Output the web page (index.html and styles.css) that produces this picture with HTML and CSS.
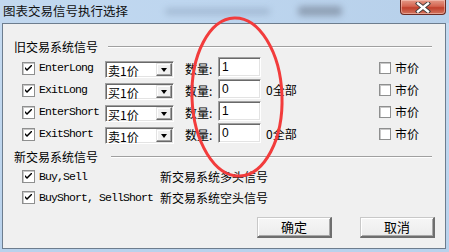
FILE: index.html
```html
<!DOCTYPE html>
<html>
<head>
<meta charset="utf-8">
<link rel="stylesheet" href="styles.css">
</head>
<body>
<div class="window">
  <div class="titlebar">
    <span class="blur blur-a"></span>
    <span class="blur blur-b"></span>
    <span class="title">图表交易信号执行选择</span>
    <div class="close">
      <svg width="16" height="11" viewBox="0 0 16 11"><path d="M3 1.5 L13 9.5 M13 1.5 L3 9.5" stroke="#3a3a3a" stroke-width="4.2" stroke-linecap="square"/><path d="M3 1.5 L13 9.5 M13 1.5 L3 9.5" stroke="#ffffff" stroke-width="2.4" stroke-linecap="square"/></svg>
    </div>
  </div>
  <div class="client">
    <div class="group-head"><span>旧交易系统信号</span><i class="rule"></i></div>
    <div class="rows">
      <span class="cb on"></span><span class="mono">EnterLong</span>
      <div class="select"><span>卖1价</span><b class="drop"><i></i></b></div>
      <span class="qty">数量:</span><div class="input">1</div><span class="extra"></span>
      <span class="cb small"></span><span class="cn">市价</span>

      <span class="cb on"></span><span class="mono">ExitLong</span>
      <div class="select"><span>买1价</span><b class="drop"><i></i></b></div>
      <span class="qty">数量:</span><div class="input">0</div><span class="extra">0全部</span>
      <span class="cb small"></span><span class="cn">市价</span>

      <span class="cb on"></span><span class="mono">EnterShort</span>
      <div class="select"><span>买1价</span><b class="drop"><i></i></b></div>
      <span class="qty">数量:</span><div class="input">1</div><span class="extra"></span>
      <span class="cb small"></span><span class="cn">市价</span>

      <span class="cb on"></span><span class="mono">ExitShort</span>
      <div class="select"><span>卖1价</span><b class="drop"><i></i></b></div>
      <span class="qty">数量:</span><div class="input">0</div><span class="extra">0全部</span>
      <span class="cb small"></span><span class="cn">市价</span>
    </div>
    <div class="group-head second"><span>新交易系统信号</span><i class="rule"></i></div>
    <div class="rows2">
      <span class="cb on"></span><span class="mono">Buy,Sell</span><span class="cn">新交易系统多头信号</span>
      <span class="cb on"></span><span class="mono">BuyShort, SellShort</span><span class="cn">新交易系统空头信号</span>
    </div>
    <div class="buttons">
      <div class="btn">确定</div>
      <div class="btn">取消</div>
    </div>
  </div>
  <svg class="annot" width="449" height="252" viewBox="0 0 449 252"><ellipse cx="237" cy="97" rx="45" ry="79" transform="rotate(-2 237 97)" fill="none" stroke="#f23c3c" stroke-width="3"/></svg>
</div>
</body>
</html>
```
FILE: styles.css
```css
* { box-sizing: border-box; }
html, body { margin: 0; padding: 0; }
body {
  width: 449px;
  height: 252px;
  overflow: hidden;
  font-family: "Noto Sans CJK SC", "Liberation Sans", sans-serif;
  font-size: 12px;
  color: #000;
}
.window {
  position: relative;
  width: 449px;
  height: 252px;
  background: linear-gradient(180deg, #c6dbf1 0%, #b9d2ec 100%);
  display: flex;
  flex-direction: column;
}
.titlebar {
  position: relative;
  height: 23px;
  display: flex;
  align-items: flex-start;
  background: linear-gradient(90deg, #c2d8ef 0%, #bed6ef 40%, #b7d0ea 100%);
}
.blur {
  position: absolute;
  filter: blur(3px);
  border-radius: 4px;
}
.blur-a { left: 165px; top: 8px; width: 105px; height: 7px; background: rgba(120,140,165,0.35); }
.blur-b { left: 298px; top: 6px; width: 44px; height: 10px; background: rgba(90,100,115,0.45); }
.title {
  position: relative;
  margin: 2px 0 0 3px;
  font-size: 12.5px;
  line-height: 17px;
  color: #111;
}
.close {
  margin-left: auto;
  margin-right: 3px;
  width: 46px;
  height: 15px;
  border: 1px solid #6b2a22;
  border-top: none;
  border-radius: 0 0 4px 4px;
  background: linear-gradient(180deg, #e49a88 0%, #d46450 45%, #c0402c 55%, #d2745e 100%);
  box-shadow: inset 0 0 0 1px rgba(255,220,210,0.45);
  display: flex;
  align-items: center;
  justify-content: center;
}
.close svg { display: block; }
.client {
  margin: 0 3px 0 2px;
  height: 226px;
  border: 1px solid #6d7d8e;
  background: #f0f0f0;
  padding-top: 16px;
  display: flex;
  flex-direction: column;
}
.group-head {
  height: 14px;
  display: flex;
  align-items: center;
  padding: 0 13px 0 11px;
  line-height: 14px;
}
.group-head .rule {
  flex: 1;
  height: 2px;
  margin-left: 10px;
  margin-top: -1px;
  border-top: 1px solid #a0a0a0;
  border-bottom: 1px solid #ffffff;
}
.group-head.second { margin-top: 5px; }
.group-head.second .rule { margin-left: 13px; }
.rows {
  margin-top: 3px;
  padding-left: 19px;
  display: grid;
  grid-template-columns: 17px 66px 80px 33px 48px 113px 16px auto;
  grid-auto-rows: 22px;
  align-items: center;
}
.rows2 {
  margin-top: 2px;
  padding-left: 19px;
  display: grid;
  grid-template-columns: 17px 121px auto;
  grid-auto-rows: 21px;
  align-items: center;
}
.cb {
  width: 13px;
  height: 13px;
  background: #fff;
  border: 1px solid #8e8f8f;
  box-shadow: inset 1px 1px 0 #c8c8c8;
  position: relative;
}
.cb.small { width: 12px; height: 12px; }
.cb.on::after {
  content: "";
  position: absolute;
  left: 2px;
  top: 2px;
  width: 7px;
  height: 7px;
  background: no-repeat center/7px 7px url("data:image/svg+xml;utf8,<svg xmlns='http://www.w3.org/2000/svg' width='7' height='7' viewBox='0 0 7 7'><path d='M0 2 L0 4 L2 6 L7 1 L7 -1 L2 4 Z' fill='black'/></svg>");
}
.mono {
  font-family: "Liberation Mono", "DejaVu Sans Mono", monospace;
  font-size: 11.5px;
  letter-spacing: -0.9px;
  white-space: pre;
  line-height: 14px;
  color: #000;
}
.select {
  width: 69px;
  height: 17px;
  margin-top: 3px;
  background: #fff;
  border-top: 1px solid #a0a0a0;
  border-left: 1px solid #a0a0a0;
  border-right: 1px solid #ffffff;
  border-bottom: 1px solid #ffffff;
  box-shadow: inset 1px 1px 0 #696969, inset -1px -1px 0 #e3e3e3;
  display: flex;
  align-items: center;
  padding-left: 2px;
  line-height: 15px;
}
.select span { flex: 1; padding-top: 1px; }
.drop {
  width: 16px;
  height: 13px;
  margin-right: 1px;
  background: #f0f0f0;
  border-top: 1px solid #e3e3e3;
  border-left: 1px solid #e3e3e3;
  border-right: 1px solid #696969;
  border-bottom: 1px solid #696969;
  box-shadow: inset -1px -1px 0 #a0a0a0, inset 1px 1px 0 #fff;
  display: flex;
  align-items: center;
  justify-content: center;
}
.drop i {
  width: 0;
  height: 0;
  border-left: 3.5px solid transparent;
  border-right: 3.5px solid transparent;
  border-top: 4px solid #000;
  margin-top: 1px;
}
.qty { line-height: 14px; margin-top: 2px; }
.input {
  width: 43px;
  height: 20px;
  margin-top: -2px;
  background: #fff;
  border-top: 1px solid #a0a0a0;
  border-left: 1px solid #a0a0a0;
  border-right: 1px solid #ffffff;
  border-bottom: 1px solid #ffffff;
  box-shadow: inset 1px 1px 0 #696969, inset -1px -1px 0 #e3e3e3;
  padding: 1px 0 0 3px;
  font-family: "Liberation Sans", sans-serif;
  font-size: 12px;
  line-height: 16px;
}
.extra { line-height: 14px; margin-top: 0px; }
.cn { line-height: 14px; }
.buttons {
  margin-top: 9px;
  display: flex;
  justify-content: flex-end;
  gap: 28px;
  padding-right: 10px;
}
.btn {
  width: 75px;
  height: 21px;
  background: linear-gradient(180deg, #f6f6f6 0%, #ececec 100%);
  border-top: 1px solid #c8c8c8;
  border-left: 1px solid #c8c8c8;
  border-right: 2px solid #6e6e6e;
  border-bottom: 2px solid #6e6e6e;
  box-shadow: inset 1px 1px 0 #ffffff, inset -1px -1px 0 #a8a8a8;
  display: flex;
  align-items: center;
  justify-content: center;
  font-size: 13px;
  line-height: 16px;
}
.annot {
  position: absolute;
  left: 0;
  top: 0;
  pointer-events: none;
}
```
